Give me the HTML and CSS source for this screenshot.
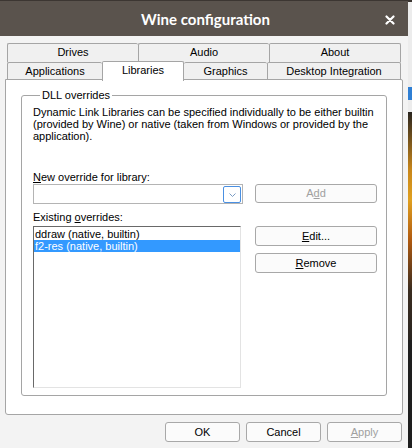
FILE: index.html
```html
<!DOCTYPE html>
<html>
<head>
<meta charset="utf-8">
<link rel="stylesheet" href="styles.css">
</head>
<body>
<div class="window">
  <div class="titlebar">
    <span class="title">Wine configuration</span>
    <svg class="close" width="10" height="10" viewBox="0 0 10 10"><path d="M1.5 1.5 L8.5 8.5 M8.5 1.5 L1.5 8.5" stroke="#ffffff" stroke-width="2.2" stroke-linecap="round"/></svg>
  </div>
  <div class="client">
    <div class="tabs">
      <div class="tabrow">
        <div class="tab w-drives">Drives</div>
        <div class="tab w-audio">Audio</div>
        <div class="tab w-about last">About</div>
      </div>
      <div class="tabrow">
        <div class="tab w-apps">Applications</div>
        <div class="tab w-libs selected">Libraries</div>
        <div class="tab w-graphics">Graphics</div>
        <div class="tab w-desktop last">Desktop Integration</div>
      </div>
    </div>
    <div class="pane">
      <fieldset class="group">
        <legend>DLL overrides</legend>
        <p class="desc">Dynamic Link Libraries can be specified individually to be either builtin<br>(provided by Wine) or native (taken from Windows or provided by the<br>application).</p>
        <div class="label label-new"><u>N</u>ew override for library:</div>
        <div class="row">
          <div class="combo">
            <div class="dropbtn">
              <svg width="9" height="6" viewBox="0 0 9 6"><path d="M1.5 1.5 L4.5 4.5 L7.5 1.5" fill="none" stroke="#7a9cc4" stroke-width="1"/></svg>
            </div>
          </div>
          <div class="btn disabled">A<u>d</u>d</div>
        </div>
        <div class="label label-existing">Existing <u>o</u>verrides:</div>
        <div class="row list-row">
          <div class="listbox">
            <div class="item">ddraw (native, builtin)</div>
            <div class="item sel">f2-res (native, builtin)</div>
          </div>
          <div class="btncol">
            <div class="btn"><u>E</u>dit...</div>
            <div class="btn"><u>R</u>emove</div>
          </div>
        </div>
      </fieldset>
    </div>
    <div class="footer">
      <div class="btn fbtn">OK</div>
      <div class="btn fbtn">Cancel</div>
      <div class="btn fbtn disabled"><u>A</u>pply</div>
    </div>
  </div>
</div>
<div class="desk"></div>
</body>
</html>
```
FILE: styles.css
```css
* { box-sizing: border-box; }
html, body { margin: 0; padding: 0; }
body {
  width: 412px;
  height: 448px;
  display: flex;
  overflow: hidden;
  font-family: "Liberation Sans", Arial, sans-serif;
  font-size: 11px;
  color: #000;
  background: #1e1e1e;
}
.window {
  width: 408px;
  height: 448px;
  display: flex;
  flex-direction: column;
  background: #f3f3f3;
}
.titlebar {
  height: 36px;
  background: #5a534d;
  border-top: 1px solid #3c3632;
  display: flex;
  align-items: center;
  justify-content: center;
  position: relative;
  color: #fff;
}
.title {
  font-family: Lato, "Open Sans", sans-serif;
  font-weight: bold;
  font-size: 15px;
  margin-left: 3px;
  margin-top: 1px;
}
.close {
  position: absolute;
  right: 13px;
  top: 14px;
}
.client {
  flex: 1;
  padding-top: 7px;
  display: flex;
  flex-direction: column;
}
.tabs {
  padding-left: 7px;
  display: flex;
  flex-direction: column;
}
.tabrow {
  display: flex;
  height: 19px;
}
.tabrow + .tabrow { height: 18px; }
.tab {
  background: #f0f0f0;
  border: 1px solid #a5a5a5;
  border-bottom: none;
  border-right: none;
  border-radius: 2px 2px 0 0;
  text-align: center;
  line-height: 17px;
  white-space: nowrap;
}
.tab.last { border-right: 1px solid #a5a5a5; }
.tabrow + .tabrow .tab { line-height: 16px; }
.w-drives { width: 131px; }
.w-audio { width: 131px; }
.w-about { width: 132px; }
.w-apps { width: 95px; }
.w-libs { width: 82px; }
.w-graphics { width: 83px; }
.w-desktop { width: 134px; }
.tab.selected {
  background: #fff;
  border-right: 1px solid #a5a5a5;
  margin-top: -1px;
  height: 20px;
  line-height: 17px;
  position: relative;
  z-index: 2;
}
.tab.selected + .tab { border-left: none; }
.pane {
  margin: -1px 5px 0 5px;
  height: 336px;
  background: #fff;
  border: 1px solid #a5a5a5;
  border-radius: 0 2px 3px 3px;
  padding: 0 15px 0 15px;
}
.group {
  margin: 9px 0 0 0;
  padding: 0 0 0 11px;
  height: 307px;
  width: 366px;
  border: 1px solid #a5a5a5;
  border-radius: 3px;
  min-width: 0;
}
.group legend {
  padding: 0 2px;
  margin-left: 7px;
  line-height: 12px;
}
.desc {
  margin: 5px 0 0 0;
  line-height: 12px;
  white-space: nowrap;
}
.label { line-height: 12px; }
.label-new { margin-top: 29px; }
.label-existing { margin-top: 7px; }
.row {
  display: flex;
  margin-top: 1px;
}
.combo {
  width: 210px;
  height: 20px;
  border: 1px solid #b4b4b4;
  background: #fff;
  padding: 1px 1px 0 0;
  display: flex;
  justify-content: flex-end;
}
.dropbtn {
  width: 18px;
  height: 17px;
  border: 1px solid #4a90e2;
  border-radius: 2px;
  background: #fff;
  display: flex;
  align-items: center;
  justify-content: center;
}
.btn {
  width: 122px;
  height: 19px;
  border: 1px solid #a8a8a8;
  border-radius: 3px;
  background: #fbfbfb;
  text-align: center;
  line-height: 17px;
  white-space: nowrap;
}
.row > .btn { margin-left: 12px; }
.btn.disabled { color: #a0a0a0; }
.list-row { margin-top: 3px; }
.listbox {
  width: 208px;
  height: 162px;
  background: #fff;
  border-top: 1px solid #696969;
  border-left: 1px solid #696969;
  border-right: 1px solid #e3e3e3;
  border-bottom: 1px solid #e3e3e3;
  padding-top: 1px;
}
.item {
  height: 12px;
  line-height: 12px;
  padding-left: 1px;
  white-space: nowrap;
}
.item.sel { background: #3399ff; color: #fff; }
.btncol {
  margin-left: 14px;
  display: flex;
  flex-direction: column;
  gap: 7px;
}
.btncol .btn { height: 20px; line-height: 18px; }
.footer {
  display: flex;
  justify-content: flex-end;
  gap: 6px;
  padding-right: 6px;
  margin-top: 7px;
}
.fbtn { width: 75px; height: 20px; line-height: 18px; }
.desk {
  width: 4px;
  height: 448px;
  background: linear-gradient(to bottom,
    #3a3430 0, #3a3430 2px,
    #ececec 2px, #ececec 87px,
    #2f7fd4 87px, #2f7fd4 100px,
    #ececec 100px, #ececec 112px,
    #2a2520 112px, #c8861a 170px, #e0a020 200px, #b05a10 240px, #3a2c20 290px,
    #2a2520 340px, #1e1e1e 340px);
}
```
